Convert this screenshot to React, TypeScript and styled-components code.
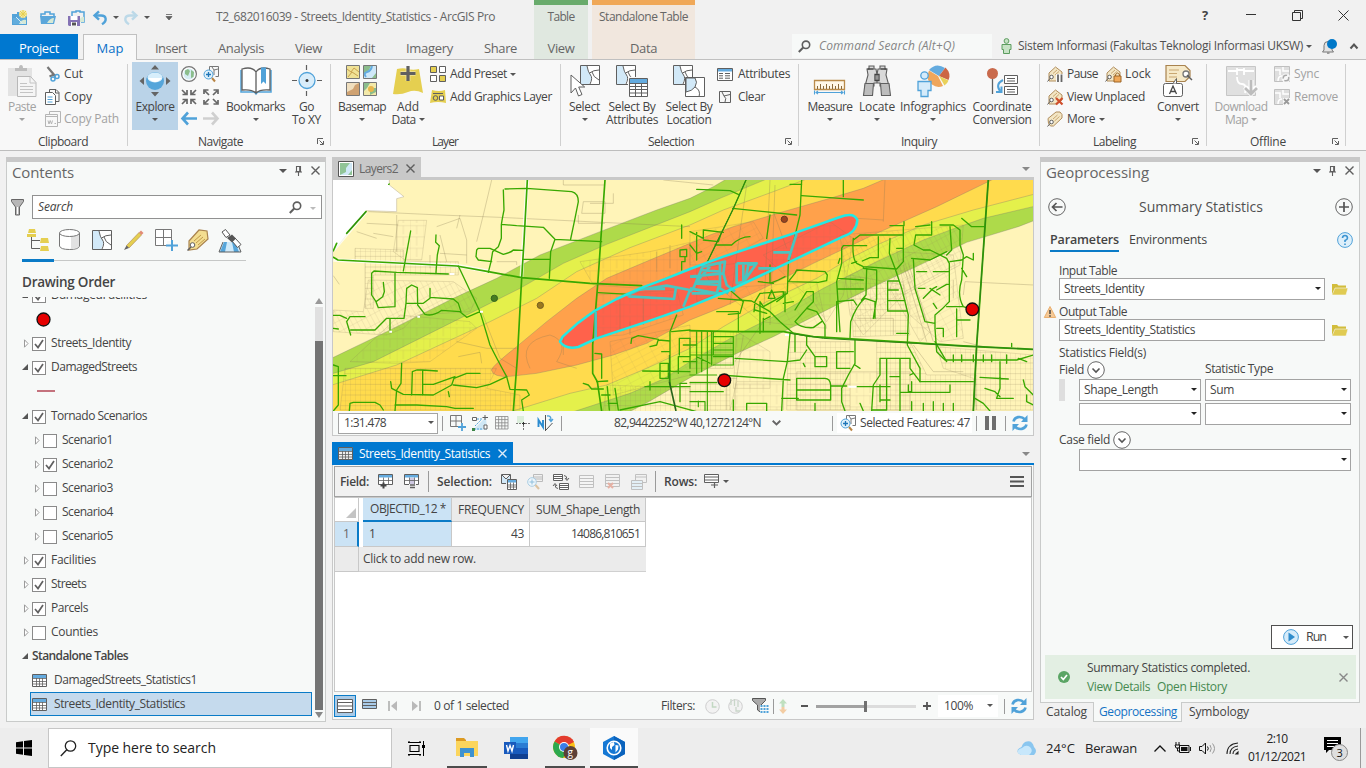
import React, { useLayoutEffect, useRef } from "react";
import styled, { createGlobalStyle, css } from "styled-components";

const Global = createGlobalStyle`
  *, *::before, *::after { box-sizing: border-box; }
  html, body { margin: 0; padding: 0; overflow: hidden; background: #f1f1f1; }
  body { font-family: "Open Sans", "Noto Sans", sans-serif; font-size: 12px; color: #444; line-height: 16px; }
  svg { display: block; flex: none; overflow: visible; }
`;

/* ---------- text that tracks itself to a set measure ---------- */

const TextBox = styled.span<{ $w: number; $ml?: number; $size?: number; $weight?: number; $italic?: boolean; $color?: string; $lh?: number }>`
  display: block;
  flex: none;
  white-space: pre;
  width: ${(p) => p.$w}px;
  margin-left: ${(p) => p.$ml ?? 0}px;
  font-size: ${(p) => p.$size ?? 12}px;
  font-weight: ${(p) => p.$weight ?? 400};
  line-height: ${(p) => p.$lh ?? 16}px;
  ${(p) => p.$italic && css`font-style: italic;`}
  ${(p) => p.$color && css`color: ${p.$color};`}
`;

type TProps = { w: number; ml?: number; size?: number; weight?: number; italic?: boolean; color?: string; lh?: number; children: string };

function T({ w, ml, size, weight, italic, color, lh, children }: TProps) {
  const ref = useRef<HTMLSpanElement>(null);
  useLayoutEffect(() => {
    const el = ref.current;
    if (!el) return;
    el.style.letterSpacing = "0px";
    const natural = el.getBoundingClientRect().width;
    el.style.letterSpacing = `${(w - natural) / children.length}px`;
  }, [w, children]);
  return (
    <TextBox $w={w} $ml={ml} $size={size} $weight={weight} $italic={italic} $color={color} $lh={lh}>
      <span ref={ref}>{children}</span>
    </TextBox>
  );
}

/* ---------- shared pieces ---------- */

const Line = styled.div<{ $ml?: number; $h?: number; $mt?: number }>`
  display: flex;
  flex: none;
  align-items: center;
  height: ${(p) => (p.$h ? `${p.$h}px` : "auto")};
  margin-left: ${(p) => p.$ml ?? 0}px;
  margin-top: ${(p) => p.$mt ?? 0}px;
`;

const IconBox = styled.span<{ $w: number; $ml?: number; $mt?: number }>`
  display: flex;
  flex: none;
  width: ${(p) => p.$w}px;
  margin-left: ${(p) => p.$ml ?? 0}px;
  margin-top: ${(p) => p.$mt ?? 0}px;
`;

function Ico({ w, h = w, ml, mt, children }: { w: number; h?: number; ml?: number; mt?: number; children: React.ReactNode }) {
  return (
    <IconBox $w={w} $ml={ml} $mt={mt}>
      <svg width={w} height={h} viewBox={`0 0 ${w} ${h}`} fill="none">
        {children}
      </svg>
    </IconBox>
  );
}

const CaretShape = styled.i<{ $c?: string; $ml?: number; $s?: number; $mt?: number }>`
  flex: none;
  width: 0;
  height: 0;
  margin-left: ${(p) => p.$ml ?? 0}px;
  margin-top: ${(p) => p.$mt ?? 0}px;
  border: ${(p) => p.$s ?? 3}px solid transparent;
  border-bottom: 0;
  border-top-color: ${(p) => p.$c ?? "#555"};
`;

const Divider = styled.i<{ $h: number; $ml: number }>`
  flex: none;
  width: 1px;
  height: ${(p) => p.$h}px;
  margin-left: ${(p) => p.$ml}px;
  background: #9a9a9a;
`;

const G = "#5f5f5f";
const B = "#50a2d9";
const Y = "#e5cf50";

const CloseX = ({ ml, c = G, s = 9 }: { ml?: number; c?: string; s?: number }) => (
  <Ico w={s} ml={ml}><path d={`M.5 .5 ${s - 0.5} ${s - 0.5}M${s - 0.5} .5 .5 ${s - 0.5}`} stroke={c} strokeWidth="1.4" /></Ico>
);
const Pin = ({ ml }: { ml: number }) => (
  <Ico w={7} h={10} ml={ml} mt={-2}><path d="M1.5 .5h4v5h-4zM4.7 .5v5M0 6h7M3.5 6v4" stroke={G} strokeWidth="1.1" /></Ico>
);
const Magnifier = ({ ml }: { ml: number }) => (
  <Ico w={13} h={13} ml={ml}><circle cx="8" cy="4.8" r="3.7" stroke={G} strokeWidth="1.6" /><path d="M5.2 7.5.8 12" stroke={G} strokeWidth="2" /></Ico>
);
const TableIcon = ({ ml, bg = "#fff" }: { ml?: number; bg?: string }) => (
  <Ico w={15} h={13} ml={ml}>
    <path d="M.5 .5h14v12H.5z" fill={bg} stroke={G} /><path d="M1 1h13v3H1z" fill="#64abdf" />
    <path d="M1 4.5h13M1 7.5h13M1 10h13M4.500 4v8.5M7.5 4v8.5M10.500 4v8.5" stroke={G} strokeWidth=".8" />
  </Ico>
);
const Refresh = ({ ml, mt }: { ml: number; mt?: number }) => (
  <Ico w={16} h={16} ml={ml} mt={mt}>
    <path d="M1.5 6.5C2.5 1.8 9 .2 13 4.5M14.5 9.5C13.5 14.2 7 15.8 3 11.5" stroke={B} strokeWidth="2.6" />
    <path d="M15.5 0v7H9zM.5 16V9H7z" fill={B} />
  </Ico>
);

/* ---------- header ---------- */

const Screen = styled.div`width: 1366px; height: 768px; display: flex; flex-direction: column; background: #f1f1f1; overflow: hidden;`;
const Header = styled.header`display: flex; flex: none; height: 60px; border-bottom: 1px solid #c0c0c0;`;
const HeadLeft = styled.div`width: 534px; display: flex; flex-direction: column; height: 60px;`;
const HeadRight = styled.div`flex: 1; display: flex; flex-direction: column;`;
const TabRow = styled.nav`display: flex; height: 26px; align-items: stretch;`;
const RibbonTab = styled.div<{ $w: number; $ml?: number; $kind?: "project" | "active" }>`
  display: flex;
  flex: none;
  justify-content: center;
  width: ${(p) => p.$w}px;
  height: 25px;
  padding-top: 3px;
  margin-left: ${(p) => p.$ml ?? 0}px;
  color: #666;
  ${(p) => p.$kind === "project" && css`background: #0078d0; color: #fff;`}
  ${(p) => p.$kind === "active" && css`height: 26px; padding-top: 2px; background: #f8f8f8; border: 1px solid #c0c0c0; border-bottom: 0; color: #0a70c8;`}
`;
const Context = styled.div<{ $w: number; $ml?: number; $bg: string; $bar: string }>`
  display: flex;
  flex: none;
  flex-direction: column;
  align-items: center;
  width: ${(p) => p.$w}px;
  height: 59px;
  margin-left: ${(p) => p.$ml ?? 0}px;
  border-top: 5px solid ${(p) => p.$bar};
  background: ${(p) => p.$bg};
  color: #666;
  padding-top: 4px;
  gap: 14px;
`;
const CommandSearch = styled.div`display: flex; align-items: center; flex: none; width: 200px; height: 24px; margin-left: 97px; background: #f7f9f8; padding-left: 6px;`;

function QuickAccess() {
  return (
    <>
      <Ico w={16} h={15} ml={12} mt={1}>
        <path d="M0 4h5V2h5v2h5v11H0z" fill="#54a3d8" /><path d="M1 8h13v6H1z" fill="#62addd" /><path d="M7 14q3-5 7-4v4z" fill="#d7e9d5" /><path d="M4 7l7 7" stroke="#d6ecf8" /><circle cx="11" cy="4" r="4" fill="#f5eaa9" /><path d="M11 0v8M7 4h8M8 1l6 6M14 1 8 7" stroke="#e5cf50" />
      </Ico>
      <Ico w={16} h={13} ml={12} mt={1}>
        <path d="M1 6V3h4V1h5v2h4v3" stroke={B} strokeWidth="1.5" /><path d="M0 5h16l-2 8H1z" fill="#5aa6da" /><path d="M7 12q3-5 7-5l-1 5z" fill="#d7e9d5" />
      </Ico>
      <Ico w={17} h={16} ml={12} mt={2}>
        <path d="M4 6V2h4V1h4v1h4v10h-3" stroke={B} strokeWidth="1.5" /><path d="M11 10q3-4 5-3v5h-4z" fill="#d7e9d5" />
        <path d="M0 6h12v10H1l-1-1z" fill="#8472b4" /><path d="M2.5 6h7v4h-7zM3 12h6v4H3z" fill="#fff" /><path d="M4 12.5h4v3H4z" fill="#555" />
      </Ico>
      <Ico w={14} h={14} ml={8} mt={3}><path d="M2 4.500h6C13.500 4.500 14.500 10 9 13.300" stroke={B} strokeWidth="2.400" /><path d="M6 .3 1.500 4.500 6 8.700" stroke={B} strokeWidth="2.400" /></Ico>
      <CaretShape $ml={6} $s={3} $mt={1} />
      <Ico w={14} h={14} ml={5} mt={3}><path d="M12 4.500H6C.5 4.500-.5 10 5 13.300" stroke="#bcd9e8" strokeWidth="2.400" /><path d="M8 .3 12.500 4.500 8 8.700" stroke="#bcd9e8" strokeWidth="2.400" /></Ico>
      <CaretShape $ml={6} $s={3} $mt={1} />
      <Ico w={6} h={6} ml={16} mt={1}><path d="M0 .5h6M0 2.500h6L3 6z" stroke={G} strokeWidth=".8" fill={G} /></Ico>
    </>
  );
}

function TopBar() {
  const tabs: [string, number, number][] = [["Insert", 32, 18], ["Analysis", 46, 31], ["View", 27, 31], ["Edit", 22, 31], ["Imagery", 47, 31], ["Share", 33, 31]];
  return (
    <Header>
      <HeadLeft>
        <Line $h={33}>
          <QuickAccess />
          <T w={279} ml={44} color="#666">T2_682016039 - Streets_Identity_Statistics - ArcGIS Pro</T>
        </Line>
        <Line $h={1} />
        <TabRow>
          <RibbonTab $w={78} $kind="project"><T w={40} size={13} lh={22}>Project</T></RibbonTab>
          <RibbonTab $w={54} $ml={5} $kind="active"><T w={27} size={13} lh={22}>Map</T></RibbonTab>
          {tabs.map(([n, w, ml]) => <RibbonTab key={n} $w={w} $ml={ml}><T w={w} size={13} lh={22}>{n}</T></RibbonTab>)}
        </TabRow>
      </HeadLeft>
      <Context $w={54} $bg="#e0e8e0" $bar="#68ab6b"><T w={27}>Table</T><T w={27} size={13} lh={18}>View</T></Context>
      <Context $w={103} $ml={4} $bg="#f1e7de" $bar="#f0a858"><T w={89}>Standalone Table</T><T w={27} size={13} lh={18}>Data</T></Context>
      <HeadRight>
        <Line $h={30} $ml={507}>
          <T w={7} size={13} weight={700}>?</T>
          <Ico w={10} h={2} ml={37}><path d="M0 .500h10" stroke="#333" /></Ico>
          <Ico w={11} h={11} ml={36}><path d="M.5 2.500h8v8h-8zM2.500 2.500V.5h8v8h-2" stroke="#333" /></Ico>
          <Ico w={11} h={11} ml={35}><path d="M.5 .5l10 10M10.500 .5l-10 10" stroke="#333" /></Ico>
        </Line>
        <Line $h={24} $mt={4}>
          <CommandSearch>
            <Magnifier ml={0} />
            <T w={136} ml={8} italic color="#858585">Command Search (Alt+Q)</T>
          </CommandSearch>
          <Ico w={11} h={16} ml={9}><circle cx="5.500" cy="3" r="2.400" fill="#c7e2c5" stroke="#5c9d5f" /><path d="M1 6.500h9v5H8.500v4h-6v-4H1z" fill="#c7e2c5" stroke="#5c9d5f" /></Ico>
          <T w={285} ml={6} color="#505050">Sistem Informasi (Fakultas Teknologi Informasi UKSW)</T>
          <CaretShape $ml={3} />
          <Ico w={15} h={15} ml={10}>
            <path d="M2 11V6.500a4 4 0 0 1 8 0V11l1.500 2H.5z" fill="#e3e3e3" stroke="#777" /><path d="M5 13.500h2.500v1.200H5z" fill="#777" /><circle cx="10" cy="5" r="5" fill="#0078c8" />
          </Ico>
          <Ico w={8} h={6} ml={13}><path d="M.5 5.500 4 1.500 7.500 5.500" stroke="#555" strokeWidth="2" /></Ico>
        </Line>
      </HeadRight>
    </Header>
  );
}

/* ---------- ribbon ---------- */

const Ribbon = styled.section`display: flex; flex: none; height: 91px; background: #f8f8f8; border-bottom: 1px solid #bdbdbd;`;
const GroupBox = styled.div<{ $w: number }>`
  display: flex;
  flex: none;
  flex-direction: column;
  width: ${(p) => p.$w}px;
  position: relative;
  &::after { content: ""; width: 1px; position: absolute; right: 0; top: 4px; bottom: 4px; background: #d0d0d0; }
`;
const GroupBody = styled.div`display: flex; height: 74px; padding-top: 2px;`;
const GroupFoot = styled.div<{ $l: number }>`display: flex; align-items: center; height: 16px; padding-left: ${(p) => p.$l}px;`;
const Big = styled.div<{ $w: number; $ml?: number; $on?: boolean; $off?: boolean }>`
  display: flex;
  flex: none;
  flex-direction: column;
  align-items: center;
  width: ${(p) => p.$w}px;
  height: 68px;
  margin-left: ${(p) => p.$ml ?? 0}px;
  padding-top: 3px;
  background: ${(p) => (p.$on ? "#bad3e8" : "transparent")};
  color: ${(p) => (p.$off ? "#a2a2a2" : "#444")};
`;
const BigLabels = styled.div`display: flex; flex-direction: column; align-items: center; margin-top: 3px;`;
const LabelLine = styled.div`display: flex; height: 13px; align-items: center;`;
const Stack = styled.div<{ $ml: number }>`display: flex; flex-direction: column; margin-left: ${(p) => p.$ml}px; padding-top: 1px;`;
const Small = styled.div<{ $off?: boolean }>`display: flex; align-items: center; height: 22.500px; color: ${(p) => (p.$off ? "#a2a2a2" : "#444")};`;
const MiniGrid = styled.div`display: grid; grid-template-columns: 16px 16px; grid-auto-rows: 16px; gap: 6.500px 6px; margin-left: 3px; padding-top: 4px;`;

const Launcher = ({ ml }: { ml: number }) => (
  <Ico w={7} h={7} ml={ml} mt={-1}><path d="M.5 6V.5H6" stroke={G} /><path d="M2.500 2.500 6 6M6.500 3v3.500H3" stroke={G} /></Ico>
);

function Group({ w, label, lw, l, launch, children }: { w: number; label: string; lw: number; l: number; launch?: number; children: React.ReactNode }) {
  return (
    <GroupBox $w={w}>
      <GroupBody>{children}</GroupBody>
      <GroupFoot $l={l}><T w={lw}>{label}</T>{launch !== undefined && <Launcher ml={launch} />}</GroupFoot>
    </GroupBox>
  );
}

type BigProps = { w: number; ml?: number; on?: boolean; off?: boolean; a: string; aw: number; b?: string; bw?: number; caret?: boolean; icon: React.ReactNode };
function BigButton({ w, ml, on, off, a, aw, b, bw, caret, icon }: BigProps) {
  return (
    <Big $w={w} $ml={ml} $on={on} $off={off}>
      <svg width="32" height="32" viewBox="0 0 32 32" fill="none">{icon}</svg>
      <BigLabels>
        <LabelLine><T w={aw} lh={13}>{a}</T></LabelLine>
        <LabelLine>
          {b && <T w={bw ?? 20} lh={13}>{b}</T>}
          {caret && <CaretShape $ml={b ? 3 : 0} $c={off ? "#a2a2a2" : undefined} $mt={b ? 0 : -1} />}
        </LabelLine>
      </BigLabels>
    </Big>
  );
}

const MapPiece = ({ x = 0, y = 0, s = 1 }: { x?: number; y?: number; s?: number }) => (
  <g transform={`translate(${x} ${y}) scale(${s})`}>
    <path d="M.5 .5h19v19H.5z" fill="#fff" /><path d="M1 1h6q1 6 3 8 3 3-1 10H1z" fill="#d2e9f8" />
    <path d="M.5 .5h19v19H.5zM7 1q1 6 3.500 9 2.500 3-.5 9M9.500 8q4-3 9.500-3M12 7q1 5 7 8" stroke={G} strokeWidth="1" fill="none" />
  </g>
);
const Tag = () => (
  <><path d="M2 7 8.500 1 15 6v5l-5 4H2z" fill="#f3e6c4" stroke="#b08d5c" /><path d="M6 7.500l4-3.500M8 9l4-3.500" stroke="#c9a772" /><circle cx="4.500" cy="11" r="1.800" fill="#fff" stroke={G} /><path d="M3.500 12 .5 15.500" stroke={G} /></>
);
const MoreTag = () => (
  <><path d="M1 7.500 9 1h4l2 2.500v3.500l-8.500 8H3.500l-2-2.500z" fill="#f3e6c4" stroke="#b08d5c" /><path d="M6 8l4.500-4M7.500 10l5-4.500" stroke="#c9a772" /><circle cx="4.500" cy="11" r="1.800" fill="#fff" stroke={G} /><path d="M3.500 12 .5 15.500" stroke={G} /></>
);

function RibbonBar() {
  return (
    <Ribbon>
      <Group w={128} label="Clipboard" lw={50} l={38}>
        <BigButton w={44} off a="Paste" aw={28} caret icon={
          <><path d="M2 3h24v28H2z" fill="#e3e3e3" /><path d="M9 6h12V3h-4q0-3-2-3t-2 3H9z" fill="#bcbcbc" /><path d="M11.500 11.500h13l5.500 6v14H11.500z" fill="#f5f5f5" stroke="#b8b8b8" /><path d="M24 12v6h6M14 18.500h7M14 21.500h13M14 24.500h13M14 27.500h13" stroke="#c4c4c4" /></>
        } />
        <Stack $ml={1}>
          <Small>
            <Ico w={16} h={16}><path d="M2.500 1l8 9.500M4.500 10.500 9 8.500" stroke="#777" strokeWidth="2.200" /><circle cx="12" cy="10.500" r="2" stroke={B} strokeWidth="1.500" /><circle cx="8" cy="13" r="2" stroke={B} strokeWidth="1.500" /></Ico>
            <T w={19} ml={3}>Cut</T>
          </Small>
          <Small>
            <Ico w={16} h={16}><path d="M4.500 3V.5h6.500l3 3v9h-3" stroke={G} /><path d="M.5 3.500h7l3 3v9H.5z" fill="#fff" stroke={G} /><path d="M2.500 8h5M2.500 10.500h5M2.500 13h5" stroke={B} /><path d="M10.500 1v3H14" stroke={G} /></Ico>
            <T w={28} ml={3}>Copy</T>
          </Small>
          <Small $off>
            <Ico w={16} h={16}><path d="M4.500 3V.5h11v11H13M.5 3.500h12v12H.5zM.5 5.500h12" stroke="#b5b5b5" /><path d="M3 9.500l1 3.500 1.200-3.500L6.500 13l1-3.500M9.500 12.500h1.500" stroke="#b5b5b5" /></Ico>
            <T w={55} ml={3}>Copy Path</T>
          </Small>
        </Stack>
      </Group>

      <Group w={203} label="Navigate" lw={45} l={70} launch={74}>
        <BigButton w={46} ml={4} on a="Explore" aw={39} caret icon={
          <><path d="M12 4.500l4-4.500 4 4.500zM12 27l4 4.500 4-4.500zM5 12 .5 16l4.500 4zM27 12l4.500 4-4.500 4z" fill="#646464" /><circle cx="16" cy="16" r="9" fill="#55a5da" /><ellipse cx="16" cy="12.500" rx="7.500" ry="5" fill="#d7eefb" /><path d="M9 13q7 8 14 0" fill="#fff" /></>
        } />
        <MiniGrid>
          <svg width="16" height="16" viewBox="0 0 16 16" fill="none"><circle cx="8" cy="8" r="7.400" fill="#fff" stroke="#777" strokeWidth="1.200" /><circle cx="8" cy="8" r="5.600" fill="#d5ecf3" /><path d="M4 4.500 7 3l2 2-2 5-3-2zM10 4l3 2-.5 5-2.500 1z" fill="#8bbd8c" /></svg>
          <svg width="16" height="16" viewBox="0 0 16 16" fill="none"><path d="M6.500 4V.5h9v10h-3M9 1l2 3 4-1M11 4v5" stroke="#777" /><circle cx="5.500" cy="8.500" r="4.500" fill="#def0fa" stroke={B} /><path d="M3 8.500h5M5.500 6v5" stroke="#1d75b8" strokeWidth="1.300" /><path d="M9 12l3 3.500" stroke="#b98443" strokeWidth="2" /></svg>
          {["M1 1 5 5M15 1 11 5M1 15l4-4M15 15l-4-4M1.500 5.500H6V1M14.500 5.500H10V1M1.500 10.500H6V15M14.500 10.500H10V15", "M2 2 6 6M14 2 10 6M2 14l4-4M14 14l-4-4M1 5V1h4.500M10.500 1H15v4M1 11v4h4.500M10.500 15H15v-4"].map((d) => (
            <svg key={d} width="16" height="16" viewBox="0 0 16 16" fill="none"><path d={d} stroke="#666" strokeWidth="1.700" /></svg>
          ))}
          <svg width="16" height="16" viewBox="0 0 16 16" fill="none"><path d="M1 7.500h15M7 1.500 1.500 7.500 7 13.500" stroke={B} strokeWidth="2.600" /></svg>
          <svg width="16" height="16" viewBox="0 0 16 16" fill="none"><path d="M0 7.500h15M9 1.500l5.500 6-5.500 6" stroke="#cfcfcf" strokeWidth="2.600" /></svg>
        </MiniGrid>
        <BigButton w={63} ml={5} a="Bookmarks" aw={59} caret icon={
          <><path d="M1 5v22h13.500l1.500 2 1.500-2H31V5" fill="#fff" stroke="#50a2d9" strokeWidth="1.500" /><path d="M16 28V7Q12 1 2 4v21q10-1 14 3 4-4 14-3V4Q20 1 16 7" fill="#fff" stroke={G} strokeWidth="1.300" /><path d="M21 2.500h5V19l-2.500-2.500L21 19z" fill={B} /></>
        } />
        <BigButton w={35} ml={2} a="Go" aw={15} b="To XY" bw={29} icon={
          <><circle cx="16" cy="15.500" r="8" fill="#d9edfa" stroke={B} strokeWidth="1.300" /><path d="M1 15.500h5M26 15.500h5M15.500 0v5M15.500 26v5" stroke={G} strokeWidth="1.200" /><circle cx="16" cy="15.500" r="1.500" fill="#333" /></>
        } />
      </Group>

      <Group w={230} label="Layer" lw={26} l={101}>
        <BigButton w={52} ml={5} a="Basemap" aw={48} caret icon={
          <>
            <path d="M.5 .5h13v13H.5z" fill="#f0e296" stroke="#777" /><path d="M1 4l4 3 3-4 5 4M2 12l4-5 6 4" stroke="#c8a14e" />
            <path d="M17.500 .5h13v13h-13z" fill="#cfe8f8" stroke="#777" /><path d="M18 1h7l-2 4-5 4zM30 8l-4 5h4z" fill="#8bbd8c" /><path d="M26 1q-1 5-5 6t-1 5" stroke="#64abdf" strokeWidth="2" />
            <path d="M.5 17.500h13v13H.5z" fill="#f0dfbf" stroke="#777" /><path d="M1 30V27L7 24l2-4 4-2v12z" fill="#cfa272" />
            <path d="M17.500 17.500h13v13h-13z" fill="#f3e9a9" stroke="#777" /><path d="M18 18h6l-3 5-3 3zM24 23h6v4l-6 3z" fill="#8bbd8c" /><circle cx="25" cy="24" r="3" fill="#e8b64c" />
          </>
        } />
        <BigButton w={34} ml={3} a="Add" aw={22} b="Data" bw={24} caret icon={
          <><path d="M5 4q6-1.500 11 0t11 0l4 24q-8-4-15-1T1 29z" fill={Y} /><path d="M16 1v15M8.500 8.500h15" stroke="#fff" strokeWidth="5" opacity=".35" /><path d="M16 1v15M8.500 8.500h15" stroke="#606060" strokeWidth="3.200" /></>
        } />
        <Stack $ml={5}>
          <Small>
            <Ico w={16} h={16}><path d="M.5 .5h6v6h-6z" fill={Y} stroke={G} /><path d="M9.500 .5h6v6h-6zM.5 9.500h6v6h-6z" fill="#fff" stroke={G} /><path d="M9.500 9.500h6v6h-6z" fill={Y} stroke={G} /></Ico>
            <T w={57} ml={4}>Add Preset</T><CaretShape $ml={3} />
          </Small>
          <Small>
            <Ico w={16} h={15}><path d="M2 1q7 2 13 0l1 13q-8-2-16 0z" fill={Y} /><path d="M3 4.500h10" stroke={G} /><circle cx="5.500" cy="9" r="2.300" stroke={G} /><path d="M9.500 7h4v4h-4z" stroke={G} fill="#fff" /></Ico>
            <T w={102} ml={4}>Add Graphics Layer</T>
          </Small>
        </Stack>
      </Group>

      <Group w={238} label="Selection" lw={46} l={87} launch={91}>
        <BigButton w={37} ml={5} a="Select" aw={31} caret icon={
          <><MapPiece x={11} y={0} /><path d="M2 10v18l4.500-5 3 8 3.500-1.500-3.300-7.500h6z" fill="#fff" stroke={G} strokeWidth="1" /></>
        } />
        <BigButton w={56} ml={1} a="Select By" aw={47} b="Attributes" bw={52} icon={
          <><MapPiece x={0} y={0} /><path d="M12 12h20v20H12z" fill="#f8f8f8" /><path d="M13.500 13.500h18v18h-18z" fill="#fff" stroke={G} /><path d="M14 14h17v4H14z" fill="#64abdf" /><path d="M13 18.500h18M13 21.500h18M13 24.500h18M13 28h18M19.500 18v13M25.500 18v13" stroke={G} /></>
        } />
        <BigButton w={50} ml={4} a="Select By" aw={47} b="Location" bw={45} icon={
          <><MapPiece x={0} y={0} /><path d="M12.500 12.500h19v19h-19z" fill="#fff" stroke={G} /><path d="M13 13h9q3 4 0 9-3 4-9 5z" fill="#d2e9f8" stroke={G} /><path d="M22 22q6 3 4 10" stroke={G} /></>
        } />
        <Stack $ml={3}>
          <Small>
            <Ico w={16} h={13}><path d="M.5 .5h15v12H.5z" fill="#fff" stroke={G} /><path d="M1 1h14v2.500H1z" fill="#64abdf" /><path d="M2 5.500h4M8 5.500h5M2 7.800h4M8 7.800h5M2 10.200h4M8 10.200h5" stroke={G} /></Ico>
            <T w={52} ml={5}>Attributes</T>
          </Small>
          <Small>
            <Ico w={12} h={12} ml={2}><path d="M.5 .5h11v11H.5zM3 1l2 4 6-1.500M5 5q3 2 1 6" stroke={G} /></Ico>
            <T w={27} ml={7}>Clear</T>
          </Small>
        </Stack>
      </Group>

      <Group w={241} label="Inquiry" lw={36} l={102}>
        <BigButton w={50} ml={6} a="Measure" aw={45} caret icon={
          <><path d="M.5 15.500h30v9H.5z" fill="#fff7e8" stroke="#b98a4a" strokeWidth="1.300" /><path d="M3.500 24v-3M6.500 24v-5M9.500 24v-3M12.500 24v-5M15.500 24v-3M18.500 24v-5M21.500 24v-3M24.500 24v-5M27.500 24v-3" stroke="#8a6a3c" /><path d="M2 27.500h27M.5 25.500v4M30.500 25.500v4M4 26l-2 1.500L4 29M27 26l2 1.500-2 1.500" stroke={B} strokeWidth="1.100" /></>
        } />
        <BigButton w={40} ml={2} a="Locate" aw={36} caret icon={
          <><path d="M8 1h5v3h2l1 6v8h-3v3H4l3-11-1-6h2zM19 1h5v3h2l-1 6 3 11h-9v-3h-3v-8l1-6h2z" fill="#d9d9d9" stroke={G} strokeWidth="1.100" /><path d="M4 18.500h8.500l-1 12H2.500zM19.500 18.500H28l1.500 12h-9z" fill="#bdbdbd" stroke={G} strokeWidth="1.100" /><path d="M14 9.500h4v6h-4zM6.500 4h6M19.500 4h6" stroke="#444" strokeWidth="1.300" /></>
        } />
        <BigButton w={70} ml={1} a="Infographics" aw={66} caret icon={
          <><path d="M22 11 12 5Q19-3 28 3z" fill="#64abdf" /><path d="M22 11 28.500 2.500q6 6 3 12.500z" fill="#cc6544" /><path d="M22 11l9.500 4.500q-1 3-4 5z" fill="#e9d15a" /><path d="M21 11 12 5.500q-4 9 3 14 5 4 11 1.500z" fill="#efa65c" /><circle cx="7.500" cy="10.500" r="3.700" fill="#d5ebfa" stroke={B} strokeWidth="1.300" /><path d="M1 16.500h13v9h-3v6H4v-6H1z" fill="#d5ebfa" stroke={B} strokeWidth="1.300" /></>
        } />
        <BigButton w={64} ml={2} a="Coordinate" aw={59} b="Conversion" bw={59} icon={
          <><path d="M6.500 8v21" stroke={G} strokeWidth="1.300" /><circle cx="6.500" cy="8.500" r="5.500" fill="#c96a4c" /><path d="M18.500 10.500h13v8h-13zM18.500 21.500h13v8h-13z" fill="#fff" stroke={G} /><path d="M21 13.500h8M21 16h8M21 24.500h8M21 27h8" stroke={G} /><path d="M17 15q-8 4-3 11M15.500 21.500v5.500H10" stroke={B} strokeWidth="2" /></>
        } />
      </Group>

      <Group w={167} label="Labeling" lw={43} l={53} launch={56}>
        <Stack $ml={7}>
          <Small>
            <Ico w={16} h={16}><Tag /><path d="M9 8h7v8H9z" fill="#f8f8f8" /><path d="M11 8.500V16M14.500 8.500V16" stroke="#666" strokeWidth="1.800" /></Ico><T w={31} ml={4}>Pause</T>
            <Ico w={16} h={16} ml={7}><Tag /><path d="M9 10h7v6H9z" fill="#f0a858" stroke="#9c6526" /><path d="M10.500 10V8.500q2-3 4 0V10" stroke="#9c6526" /></Ico><T w={26} ml={4}>Lock</T>
          </Small>
          <Small><Ico w={16} h={16}><Tag /><path d="M9 9l6.500 6.500M15.500 9 9 15.500" stroke="#cf4f2c" strokeWidth="2.200" /></Ico><T w={78} ml={4}>View Unplaced</T></Small>
          <Small><Ico w={16} h={16}><MoreTag /></Ico><T w={28} ml={4}>More</T><CaretShape $ml={4} /></Small>
        </Stack>
        <BigButton w={46} ml={4} a="Convert" aw={42} caret icon={
          <><path d="M4 .5h19l5 5v6l-5 5H4z" fill="#f6e9c8" stroke="#a9834f" strokeWidth="1.200" /><path d="M7 5h10M7 8.500h8M7 12h8" stroke="#c9a772" /><circle cx="24" cy="9" r="3" fill="#fff" stroke="#777" strokeWidth="1.300" /><path d="M25 10l5 5" stroke={G} strokeWidth="1.500" /><rect x="1.500" y="18.500" width="19" height="13" rx="2" fill="#fff" stroke={G} /><path d="M11 18.500l3.500-5v5" fill="#fff" stroke={G} /><path d="M7.500 29l3.500-8 3.500 8M8.500 26.500h5" stroke="#444" strokeWidth="1.300" /></>
        } />
      </Group>

      <Group w={139} label="Offline" lw={36} l={43} launch={46}>
        <BigButton w={56} ml={6} off a="Download" aw={53} b="Map" bw={23} caret icon={
          <><path d="M1.500 1.500h29v29h-29z" fill="#e0e0e0" stroke="#c6c6c6" /><path d="M3 6h9M12 3v7M12 5h7M19 3v7M19 6h10M12 12q0 7 5 7t3 9" stroke="#fff" strokeWidth="1.800" /><path d="M26 15v13M20 22l6 6.500 6-6.500" stroke="#fff" strokeWidth="5" /><path d="M26 15v14M20 23l6 6 6-6" stroke="#bdbdbd" strokeWidth="2.800" /></>
        } />
        <Stack $ml={5}>
          <Small $off><Ico w={16} h={16}><path d="M.5 .5h15v15H.5z" fill="#dedede" stroke="#c0c0c0" /><path d="M1 4h5v5M9 1v4h6M4 15q0-5 4-5" stroke="#fff" strokeWidth="1.500" /><circle cx="12" cy="12" r="4.500" fill="#f8f8f8" /><circle cx="12" cy="12" r="2.800" stroke="#aaa" strokeWidth="1.500" strokeDasharray="6 2" /></Ico><T w={25} ml={4}>Sync</T></Small>
          <Small $off><Ico w={16} h={16}><path d="M.5 .5h15v15H.5z" fill="#dedede" stroke="#c0c0c0" /><path d="M1 4h5v5M9 1v4h6M4 15q0-5 4-5" stroke="#fff" strokeWidth="1.500" /><path d="M9 9h7v7H9z" fill="#f8f8f8" /><path d="M10 10l5 5M15 10l-5 5" stroke="#999" strokeWidth="1.800" /></Ico><T w={44} ml={4}>Remove</T></Small>
        </Stack>
      </Group>
    </Ribbon>
  );
}

/* ---------- contents pane ---------- */

const Workspace = styled.main`display: flex; flex: none; height: 577px; padding: 6px 6px 0 6px;`;
const Pane = styled.section<{ $w: number; $h: number; $pl?: number }>`
  display: flex;
  flex-direction: column;
  flex: none;
  width: ${(p) => p.$w}px;
  height: ${(p) => p.$h}px;
  padding-left: ${(p) => p.$pl ?? 0}px;
  background: #f7f9f8;
  border: 1px solid #c9cbca;
  border-top: 5px solid #c8c8c8;
`;
const FindBox = styled.div`display: flex; align-items: center; width: 290px; height: 24px; margin-left: 8px; border: 1px solid #919191; background: #fff;`;
const ToolTabs = styled.div`display: flex; align-items: flex-start; height: 32px; width: 224px; margin: 10px 0 0 14px; border-bottom: 1px solid #c6c8c7;`;
const ActiveBar = styled.i`display: block; width: 32px; height: 3px; margin: -2px 0 0 14px; background: #0a7bc7; position: relative;`;
const TreeWrap = styled.div`display: flex; height: 422px; margin-top: 5px; overflow: hidden;`;
const Tree = styled.div`width: 304px; margin-top: -14px;`;
const TreeRow = styled.div<{ $pad: number; $h?: number }>`display: flex; align-items: center; height: ${(p) => p.$h ?? 24}px; padding-left: ${(p) => p.$pad}px;`;
const SelectedRow = styled.div`display: flex; align-items: center; width: 282px; height: 24px; margin-left: 22px; padding-left: 1px; border: 1px solid #0a7bc7; background: #c5daed;`;
const Check = styled.span`display: flex; flex: none; width: 14px; height: 14px; margin-top: 2px; border: 1px solid #8a8a8a; background: #fff;`;
const ScrollBar = styled.div`display: flex; flex-direction: column; align-items: center; width: 8px; margin-left: 3px; padding-top: 1px;`;
const ScrollTrack = styled.i`display: block; width: 8px; height: 34px; margin-top: 3px; background: #e0e0e0;`;
const ScrollThumb = styled.i`display: block; width: 8px; height: 369px; background: #747474;`;

const Toggle = ({ open }: { open?: boolean }) =>
  open ? <Ico w={10} h={6}><path d="M6 0v6H0z" fill="#555" /></Ico> : <Ico w={10} h={9}><path d="M2.500 .8v7.400L6 4.500z" fill="#fff" stroke="#9a9a9a" /></Ico>;

function TreeItem({ name, w, pad = 14, open, on, h }: { name: string; w: number; pad?: number; open?: boolean; on?: boolean; h?: number }) {
  return (
    <TreeRow $pad={pad} $h={h}>
      <Toggle open={open} />
      <Check>{on && <svg width="12" height="12" viewBox="0 0 12 12" fill="none"><path d="M2 6l3 3.500L10 2" stroke="#606060" strokeWidth="1.700" /></svg>}</Check>
      <T w={w} ml={5}>{name}</T>
    </TreeRow>
  );
}

const PaneTools = () => (<><Pin ml={8} /><Line $mt={-3}><CloseX ml={9} /></Line></>);

function Contents() {
  return (
    <Pane $w={320} $h={565} $pl={1}>
      <Line $h={21} $ml={4} $mt={-1}><T w={62} size={15} lh={20} color="#666">Contents</T><CaretShape $ml={205} $s={4} $mt={-1} /><PaneTools /></Line>
      <Line $ml={3} $mt={13}>
        <Ico w={13} h={17}><path d="M.5 .5h12v2L8.500 8v8h-4V8L.5 2.500z" fill="#b7b7b7" stroke="#666" /><path d="M6.500 8v7" stroke="#fff" /></Ico>
        <FindBox><T w={35} ml={5} italic>Search</T><Magnifier ml={216} /><CaretShape $ml={8} $c="#bbb" $mt={3} /></FindBox>
      </Line>
      <ToolTabs>
        <Ico w={22} h={22} ml={5}><path d="M2 0h6l1 4H1zM0 5h9v3H0zM14 9h7l1 5h-9zM14 17h7l1 5h-9z" fill={Y} /><path d="M4.500 8v11.500H13M4.500 11.500H13" stroke={G} /></Ico>
        <Ico w={21} h={21} ml={10}><path d="M.5 4v13q1 3.500 10 3.500t10-3.500V4" fill="#fff" stroke="#777" /><path d="M12 5h8v12q-2 3-8 3z" fill="#e2e2e2" /><ellipse cx="10.500" cy="4" rx="10" ry="3.500" fill="#fff" stroke="#777" /></Ico>
        <Ico w={20} h={20} ml={12} mt={1}><MapPiece /></Ico>
        <Ico w={20} h={20} ml={12} mt={1}><path d="M2.500 15.500 15 2.500l2.500 2.500L5 18z" fill={Y} stroke="#a9834f" strokeWidth=".6" /><path d="M15 2.500 17 .5l2.500 2.500-2 2z" fill="#e28b75" /><path d="M2.500 15.500 0 20l5-2z" fill="#666" /></Ico>
        <Ico w={23} h={22} ml={11}><path d="M.5 .5h16v16H.5zM8.500 .5v16M.5 8.500h16" stroke="#777" fill="#fff" /><path d="M12 12h12v11H12z" fill="#f7f9f8" opacity=".8" /><path d="M17 11v11M11 16.500h12" stroke="#50a2d9" strokeWidth="2" /></Ico>
        <Ico w={22} h={22} ml={9}><path d="M2 12 12 1l8 1 1 8-11 10-8 1z" fill="#f3dd90" stroke="#a9834f" strokeWidth="1.200" /><path d="M7 12l7-6M9 14l7-6M11 16l7-6" stroke="#c09a4c" /><circle cx="5.500" cy="16" r="2.300" fill="#fff" stroke={G} /><path d="M4 18 .5 21.500" stroke={G} strokeWidth="1.500" /></Ico>
        <Ico w={24} h={24} ml={9}><path d="M5 13 1 23h22l-4-10z" fill="#cfeafa" /><path d="M6 13h3l-2 10H2zM14 13l2 10h5l-4-10z" fill="#55a5da" /><path d="M1 23h22L19 13M5 13 1 23" stroke={G} /><path d="M4 3 7.500 .5 12 6 8 8.500zM14 12l3-3 6 6.500-3.500 3z" fill="#fff" stroke="#555" strokeWidth="1" /><path d="M9 9l5-3.500 4 4-4 4z" fill="#555" /></Ico>
      </ToolTabs>
      <ActiveBar />
      <Line $h={20} $ml={14} $mt={10}><T w={93} size={13.5} weight={600} lh={20}>Drawing Order</T></Line>
      <TreeWrap>
        <Tree>
          <TreeItem name="DamagedFacilities" w={96} open on />
          <TreeRow $pad={28}><Ico w={15} h={15}><circle cx="7.500" cy="7.500" r="6.500" fill="#e60000" stroke="#111" strokeWidth="1.300" /></Ico></TreeRow>
          <TreeItem name="Streets_Identity" w={80} on />
          <TreeItem name="DamagedStreets" w={86} open on />
          <TreeRow $pad={29}><Ico w={18} h={2}><path d="M0 1h18" stroke="#c4727d" strokeWidth="2" /></Ico></TreeRow>
          <TreeItem name="Tornado Scenarios" w={96} open on h={25} />
          {[1, 2, 3, 4, 5].map((n) => <TreeItem key={n} name={`Scenario${n}`} w={51} pad={25} on={n === 2} />)}
          <TreeItem name="Facilities" w={45} on />
          <TreeItem name="Streets" w={35} on />
          <TreeItem name="Parcels" w={37} on />
          <TreeItem name="Counties" w={47} />
          <TreeRow $pad={14}><Toggle open /><T w={96} weight={600}>Standalone Tables</T></TreeRow>
          <TreeRow $pad={24}><TableIcon /><T w={143} ml={7}>DamagedStreets_Statistics1</T></TreeRow>
          <SelectedRow><TableIcon /><T w={131} ml={7}>Streets_Identity_Statistics</T></SelectedRow>
        </Tree>
        <ScrollBar>
          <Ico w={8} h={6}><path d="M4 0l4 6H0z" fill="#999" /></Ico>
          <ScrollTrack /><ScrollThumb />
          <Ico w={8} h={7} mt={2}><path d="M0 0h8L4 6z" fill="#888" /></Ico>
        </ScrollBar>
      </TreeWrap>
    </Pane>
  );
}

/* ---------- map ---------- */

const red = "M690 560L698 545L745 503L790 470L860 432L930 400L1010 370L1080 342L1180 305L1400 232L1530 186Q1572 170 1582 195Q1580 232 1540 244L1370 325L1200 405L1080 455L960 497L800 550L745 576Q705 584 690 560Z";

function Hatch({ d, r = 0, kind = "p1" }: { d: string; r?: number; kind?: string }) {
  return <path d={d} fill={`url(#${kind}${r ? "r" : ""})`} stroke="rgba(135,120,85,.3)" strokeWidth="2" />;
}

const MapSvg = styled.svg`&& { overflow: hidden; }`;

function MapDrawing() {
  return (
    <MapSvg width="700" height="231" viewBox="333 180 700 231" fill="none">
      <defs>
        <pattern id="p1" width="15" height="32" patternUnits="userSpaceOnUse"><path d="M0 0V32M0 0H15M0 16H15" stroke="rgba(135,120,85,.3)" strokeWidth="2" /></pattern>
        <pattern id="p1r" width="15" height="30" patternUnits="userSpaceOnUse" patternTransform="rotate(-28)"><path d="M0 0V30M0 0H15" stroke="rgba(135,120,85,.3)" strokeWidth="2" /></pattern>
        <pattern id="p2" width="40" height="34" patternUnits="userSpaceOnUse"><path d="M0 0V34M0 8H40M20 8V34" stroke="rgba(135,120,85,.2)" strokeWidth="2" /></pattern>
        <pattern id="p2r" width="18" height="34" patternUnits="userSpaceOnUse" patternTransform="rotate(62)"><path d="M0 0V34M0 0H18" stroke="rgba(135,120,85,.24)" strokeWidth="2" /></pattern>
      </defs>
      <path d="M333 180h700v231H333z" fill="#fff4b8" />
      <g transform="translate(330 155) scale(.33333)" strokeLinejoin="round">
        <path d="M0 60H178V90L222 125L200 131V170L108 167L8 292Z" fill="#fff" stroke="#c9c0a4" strokeWidth="2" />
        {/* wind bands, outermost first */}
        <g stroke="rgba(120,120,110,.5)" strokeWidth="2">
          <path d="M0 612L170 530L370 430L500 370L630 300L810 230L980 165L1080 130L1150 95L1210 60H2130V190L2065 215L1910 262L1780 325L1620 400L1480 470L1330 545L1210 600L1080 668L960 738L880 780H0Z" fill="#aeda4a" />
          <path d="M0 658L130 620L430 470L570 400L700 325L830 268L1080 170L1170 130L1310 72H2130V150L1960 190L1880 218L1780 255L1640 320L1480 400L1340 480L1210 545L1080 620L1000 672L900 715L700 780H0Z" fill="#e4f04b" />
          <path d="M0 692L200 630L480 500L620 430L740 350L900 278L1080 210L1180 165L1330 110L1430 72H2130V113L1930 165L1780 210L1640 270L1560 310L1460 370L1310 440L1180 515L1080 580L950 640L830 690L720 715L510 780H0Z" fill="#ffdb4d" />
          <path d="M484 645Q490 630 560 575L650 500L740 430L830 370L960 315L1080 265L1140 240L1210 215L1360 170L1500 130L1600 100L1670 70H1995L1820 155L1640 235L1450 325L1280 410L1180 455L1080 495L950 565L850 600L740 630L620 655L540 664Q490 668 484 645Z" fill="#ffa14b" />
        </g>
        <path d={red} fill="#ff624b" />

        {/* parcels */}
        <Hatch d="M105 320H385V360H130V460H105Z" /><Hatch d="M75 280L220 285V320H75Z" /><Hatch d="M205 196H290L275 315H225L190 290Z" kind="p2" />
        <Hatch d="M115 375L370 380L440 430L420 470L260 480L220 520L170 540L10 530V465L100 470Z" r={1} />
        <Hatch d="M210 480L420 500L440 520L300 620L200 625L60 620Z" kind="p2" />
        <Hatch d="M45 640H500L470 700L570 720V765H30Z" /><Hatch d="M750 320L960 290L1080 262V340L930 400L790 390Z" kind="p2" />
        <Hatch d="M800 420L1040 405L1060 480L880 540L800 545Z" kind="p2" /><Hatch d="M840 560L1080 510V660L850 720Z" r={1} kind="p2" />
        <Hatch d="M830 690L1080 700V770H820Z" /><Hatch d="M1080 230L1270 200L1300 250L1160 330L1080 330Z" r={1} kind="p2" />
        <Hatch d="M1100 340L1260 320L1330 350L1100 440Z" r={1} kind="p2" /><Hatch d="M1170 400L1460 380L1490 520L1290 500Z" r={1} kind="p2" />
        <Hatch d="M1300 300L1500 200L1570 250L1540 420L1490 500L1450 440Z" kind="p2" />
        <Hatch d="M1530 240L1900 210L1890 330L1720 420L1600 540L1560 480Z" r={1} /><Hatch d="M1560 360L1720 390L1740 540L1570 545Z" />
        <Hatch d="M1700 290L1870 300L1900 550L1830 560L1740 480Z" r={1} kind="p2" /><Hatch d="M1720 310L1800 530L1770 560L1680 400Z" kind="p2" />
        <Hatch d="M1220 530L1320 590V700H1210Z" kind="p2" /><Hatch d="M1375 560H1560V765H1370Z" /><Hatch d="M1400 650H1740V765H1400Z" kind="p2" />
        <Hatch d="M1640 560H1740L1790 660H1940V765H1640Z" /><Hatch d="M1820 575L2110 600V765H1940L1930 670L1840 640Z" />
        <Hatch d="M1220 680H1360V765H1200Z" kind="p2" /><Hatch d="M1080 530H1210V640H1080Z" kind="p1" /><Hatch d="M1080 680H1200V765H1080Z" />
        <g stroke="rgba(135,120,85,.36)" strokeWidth="2.500">
          <path d="M485 75L460 180L440 260M115 170L330 180L510 187L1080 215M110 205L205 210M80 230L140 250M130 235L190 245M320 215L390 190L410 255V325M330 295L410 300M330 240L350 320M500 320H560V330M700 75V90H825M760 140H825V175H755ZM850 115V145H780M745 180V205H825M380 560L470 580H560M385 605L450 592L455 625M10 362L28 388M600 640Q560 560 660 540Q720 560 680 620L740 640M1000 75L1150 90M1330 170L1370 280M1580 190L1660 195M1665 75L1660 200M1900 420L1905 380L2110 390M1870 375V430M1580 490H1690V540M1900 560L1960 575M1320 75L1300 500L1215 620M1335 90L1320 510M1250 90L1230 230L1200 450M455 470L510 610L560 640M1220 670H1190V765M1240 540L1215 700V765M1720 330L1790 560M1735 325L1810 560M1750 570L1810 650H1900" />
          <path d="M390 180L380 220M200 180V290M300 340V300M980 290V350M1020 270V340M900 500V540M700 600V540M940 430V510M870 430V530M1110 330L1140 380" />
        </g>
        <path d="M592 75L574 370M10 315L380 332L480 350M108 170L10 285" stroke="#fff" strokeWidth="11" opacity=".75" />

        {/* road centre lines */}
        <g stroke="#38a800" strokeWidth="4" strokeLinecap="round">
          <path d="M592 75L582 260L575 370L562 610L550 768M825 75L812 260L803 390L788 570V655L802 680L815 768M10 307L24 315L380 333L475 350L575 368L780 385L935 392M108 170L50 235M20 265L10 287" strokeWidth="5" />
          <path d="M525 102L590 100L725 110Q745 115 745 140L735 190L722 252M520 105L522 165Q515 200 514 210V250L505 275L488 290L483 320L475 352M514 208L560 212L640 217L675 253L815 260M675 253L662 290L658 370M580 313H658M440 285L445 280H480L520 298Q545 292 550 285L578 286M440 285L438 305L445 315L485 320M176 88L178 87" />
          <path d="M242 228L220 348M318 240L317 262L328 272L322 300L318 352M385 333L450 470L480 570Q500 610 530 665L540 703L590 705L598 720L575 735L580 768M160 382L163 410L158 425L138 440L125 420V355L132 348L200 352L355 357M195 355V455L145 458L138 440M228 445L230 400L245 390L262 398L263 450L285 478Q310 485 335 466L390 470L410 487L450 470M300 400V430L280 445H228L222 490H170L135 525H62M300 427L370 432L385 445L393 470M180 490V525M62 540L50 500L60 485H105M50 490L30 481H10M10 520L25 522" />
          <path d="M215 625L213 685L200 705L195 768M182 680L185 700L220 718L310 720L365 690L372 670L410 655H450M245 720L247 650L260 645H278V720M278 645L322 648M278 688H310L375 665M370 690L440 698L480 688L530 665M355 710L358 725M58 768L60 745L70 742H135L150 750L160 765M195 750H260L350 755L375 760H430M10 630L25 635V750L10 768M10 662H48" />
          <path d="M803 413L900 418M795 595L815 597V670M760 685L775 690L785 702H820M800 680L833 678M832 695L838 765M855 700L865 765M815 720H840M835 745H860M903 565L905 550L925 542L985 553L980 570L960 575M985 555L1020 558M1040 480L1020 530V690M1025 530L1080 525M938 648L1080 650M990 645V670H1015V625H990ZM995 590H1020M1048 600V550H1080M1045 655V605H1080M1050 740V685H1070M945 695H1080M960 680V705M1100 770L990 740L870 765M1060 570H1100M1060 620H1100M1055 210V250M1050 285L1070 283V305H1050ZM1065 305V320H1055V345" />
          <path d="M1248 75L1208 165L1130 325M1208 160L1400 180M1100 103L1200 107L1225 118M1415 75L1410 180L1375 325L1372 415L1300 455L1290 440V535M1415 122L1530 130L1600 135M1540 75V125M1380 88H1415M1320 180L1310 250M1080 230L1120 250V225L1180 232M1100 232V315M1155 270H1205Q1230 245 1260 245M1080 270L1100 295L1115 290M1120 255L1165 260L1175 230" />
          <path d="M1395 355L1400 345L1485 350L1492 360L1490 377L1465 382L1375 380ZM1320 330V385L1345 375L1365 365M1285 380L1330 385" />
          <path d="M1080 527L1210 530H1360L1450 545L1700 560L1900 573L2110 583M1975 75L1965 215L1940 570L1930 768" strokeWidth="5.500" />
          <path d="M1165 430L1265 438L1320 470L1350 500L1390 535L1440 545M1272 470L1275 440L1290 415L1360 410V425L1340 440M1275 465L1310 475M1300 490V530M1300 495L1320 485M1395 465L1430 410H1450V440L1430 460L1395 500Q1410 520 1450 518L1475 500M1430 460L1460 470L1485 510V545M1365 470V410M1390 440L1360 445M1200 405L1240 440L1230 475L1195 478M1325 405L1315 430H1335Z" />
          <path d="M1530 530L1520 380L1535 325V280L1540 272H1610M1525 370L1600 375M1525 402H1600M1525 325L1530 310M1610 340L1608 420L1595 435V440M1570 250Q1565 310 1580 325L1600 335L1700 342L1720 320V215M1570 255L1590 240H1720M1600 335V340L1640 345V430M1597 318L1620 308H1645V245M1520 500V440L1570 435L1580 450M1520 500V530M1560 550L1562 500Q1580 450 1605 430L1635 440V490M1680 250L1678 295L1695 340L1715 400L1735 480L1732 570L1770 640V680M1673 378V468H1730M1673 378H1705M1673 405H1705M1673 437H1725M1565 325L1580 320M1640 430L1630 490M1700 280H1720" />
          <path d="M1680 212H1722V200M1805 200V240H1757L1752 270L1780 285H1800L1850 310L1858 325V440Q1840 460 1815 480V520L1820 590L1845 615H2060L2110 600M1757 215L1800 210M1860 215L1865 285L1850 300M1830 210H1870L1890 225V270L1900 300L1895 375Q1880 420 1900 455L1850 455M1895 190L1925 215H1965M1745 310L1800 315L1850 290M1750 312L1755 400L1785 500L1815 505M1760 350H1790M1810 350H1855M1765 400H1785M1780 430L1810 400L1820 395M1810 445L1820 460M1820 405L1850 388H1858M1800 400L1830 420M1860 320L1895 315L1910 305M1910 305L1930 315V295M1895 340L1910 365M1900 455L1930 465M1880 462V545M1880 495H1920M1820 520H1840V545M1840 520V545M1700 535H1735" />
          <path d="M1380 535L1372 620L1360 670L1355 768M1395 535V590M1430 545V570L1455 605H1490V635H1455V605M1430 585L1410 615L1370 620L1215 610M1420 625L1425 635M1575 555V625L1555 660L1535 700V740L1545 768M1575 630L1590 640M1570 590H1520V640H1560M1400 670H1485Q1500 670 1502 690V735H1400V680ZM1355 730H1405M1502 693H1550M1400 705H1500M1625 768L1630 690L1650 660V610H1740V640L1770 680H1930M1580 695H1680M1600 768L1590 745M1625 765H1670V610M1710 610V768M1680 665H1710M1735 690V710H1745V680M1710 712H1860V690M1750 655L1740 660M1650 735H1680M1650 690V740M1815 560L1850 620M1870 600V620M1895 600V620M1930 600V620M1960 600V620M1985 600V620M2030 600V625M2045 565V575M2010 620V700L2000 730H2050M1950 667L2035 672M1965 700L1995 710L2010 725M1935 730L1960 745L1980 768M2080 675L2085 695L2110 720M2090 720V740L2110 750M1745 740V768M1780 745V768M1810 740V768M1840 745V768M1870 745V768M2065 610L2090 620M1250 765V745H1310V768M1210 735V768M1455 745V768M1170 660L1380 675" />
          <path d="M1080 550V640M1100 530V655M1115 530V650M1132 530V768M1150 530V600M1080 600H1210M1150 545H1210V630H1150M1150 565H1210M1150 585H1210M1150 605H1210M1080 683H1160M1080 710H1180M1080 740H1125V768M1080 660H1160M1145 530V630M1100 605L1140 625M1160 470H1225V530M1105 738V755" strokeWidth="3.500" />
        </g>
        <path d="M1248 75L1208 165L1130 325M1018 600V680M1380 535L1480 550L1900 573L2110 583M108 170L50 235M1975 75L1965 215L1940 570L1930 768" stroke="#2d8416" strokeWidth="3" />
        <path d="M1018 680L1038 768" stroke="#26641a" strokeWidth="5" />
        <path d="M360 357h13M262 485h8M450 470h9M1365 540h12M1555 695h25M178 530h8" stroke="#fff" strokeWidth="6" />

        {/* selected features */}
        <g stroke="#4cc4c0" strokeWidth="8">
          <path d="M797 470V550M890 422L925 405L1010 392L1080 405L1060 455M1038 398L1032 432L895 424M925 402H1005" />
          <path d="M1120 330L1090 400L1080 410M1120 335L1185 320L1180 355L1080 365M1140 335L1100 380H1170L1160 415L1080 400M1170 325V400L1195 415M1180 355L1190 390L1215 410M1220 325V385L1245 380L1255 330L1280 327M1220 325L1280 325L1245 375M1285 340H1335M1400 235L1375 315M1330 292H1385M1110 345L1170 350M1095 385L1170 390M1085 415H1180M1240 330V380" />
        </g>
        <path d={red} stroke="#22e9e4" strokeWidth="7.500" />
        <circle cx="493" cy="430" r="9.500" fill="#467d22" stroke="#34641c" strokeWidth="3" />
        <circle cx="631" cy="451" r="9.500" fill="#9b781e" stroke="#766021" strokeWidth="3" />
        <circle cx="1363" cy="193" r="9.500" fill="#9b4420" stroke="#6a3820" strokeWidth="3" />
        <circle cx="1927" cy="463" r="19" fill="#e60000" stroke="#111" strokeWidth="4" />
        <circle cx="1183" cy="676" r="19" fill="#e60000" stroke="#111" strokeWidth="4" />
      </g>
    </MapSvg>
  );
}

const Center = styled.div`display: flex; flex-direction: column; width: 702px; margin-left: 6px; flex: none;`;
const TabStrip = styled.div<{ $line: string; $b: number }>`
  display: flex;
  height: 23px;
  flex: none;
  align-items: flex-start;
  justify-content: space-between;
  border-bottom: ${(p) => p.$b}px solid ${(p) => p.$line};
`;
const DocTab = styled.div<{ $w: number; $bg: string; $c: string }>`display: flex; align-items: center; width: ${(p) => p.$w}px; height: 21px; padding: 2px 0 0 6px; background: ${(p) => p.$bg}; color: ${(p) => p.$c};`;
const StripCaret = styled.div`display: flex; padding: 10px 4px 0 0;`;
const MapFrame = styled.div`display: flex; flex-direction: column; flex: none; height: 256px; border: 1px solid #c8c8c8; border-top: 0; background: #f7f9f8;`;
const MapFooter = styled.div`display: flex; align-items: center; height: 24px; padding-left: 5px;`;
const ScaleBox = styled.div`display: flex; align-items: center; width: 100px; height: 21px; border: 1px solid #a4a4a4; background: #fff;`;
const SelectedCount = styled.div`display: flex; align-items: center; width: 135px; height: 20px; margin-left: 4px; background: #fff; padding-left: 3px;`;

function MapView() {
  return (
    <>
      <TabStrip $line="#c8c8c8" $b={3}>
        <DocTab $w={89} $bg="#c8c8c8" $c="#666">
          <Ico w={16} h={16}><path d="M.5 .5h15v15H.5z" fill="#fff" stroke="#555" /><path d="M2 2h12v12H2z" fill="#cfe8f6" /><path d="M2 2h10L8 7v4L2 14zM10 14l4-5v5z" fill="#90c497" /></Ico>
          <T w={39} ml={5}>Layers2</T><CloseX ml={8} />
        </DocTab>
        <StripCaret><CaretShape $s={4} $c="#888" /></StripCaret>
      </TabStrip>
      <MapFrame>
        <MapDrawing />
        <MapFooter>
          <ScaleBox><T w={42} ml={5}>1:31.478</T><CaretShape $ml={42} $mt={-2} /></ScaleBox>
          <Divider $h={15} $ml={4} />
          <Ico w={16} h={16} ml={7}><path d="M.5 .5h11v11H.5zM6 .5v11M.5 6h11" stroke="#777" /><path d="M8 8h8v8H8z" fill="#f7f9f8" /><path d="M12 8v8M8 12h8" stroke={B} strokeWidth="1.800" /></Ico>
          <Ico w={16} h={16} ml={6}><path d="M1 15L14 2l1 13z" fill="#cfe8f6" /><path d="M.5 2.500h4v3h-4zM12 10h3v4h-3z" fill="#fff" stroke="#666" /><path d="M5 4h6M3 11l6-6M2 14h9" stroke={B} strokeDasharray="2 1" /><path d="M13 0v5M10.500 2.500H16" stroke={G} /><path d="M0 13h3v3H0z" fill="#3c8648" /></Ico>
          <Ico w={14} h={14} ml={7}><path d="M.5 .5h12.500v12.500H.5zM3.600 .5V13M6.800 .5V13M9.900 .5V13M.5 3.600H13M.5 6.800H13M.5 9.900H13" stroke="#888" strokeWidth=".8" /></Ico>
          <Ico w={15} h={15} ml={7}><path d="M1 0h7v7H1z" fill="#dbeedb" /><path d="M7.500 9v6M0 7.500h6M9 7.500h6" stroke="#777" strokeDasharray="2 1" /><path d="M7.500 6v3M6 7.500h3" stroke="#333" /></Ico>
          <Ico w={16} h={16} ml={6}><path d="M1.500 12V5l4.500 7V5" stroke="#2b8cd0" strokeWidth="1.900" /><path d="M8.500 0v16M9 15 15.500 8" stroke="#555" /><path d="M10 1q4-1 4 4M12 4l2 2.500L16 4" stroke={B} strokeWidth="1.300" /></Ico>
          <Divider $h={15} $ml={8} />
          <T w={147} ml={52}>82,9442252°W 40,1272124°N</T>
          <Ico w={9} h={6} ml={11}><path d="M.7 .8 4.500 4.500 8.300 .8" stroke="#666" strokeWidth="1.900" /></Ico>
          <Divider $h={15} $ml={51} />
          <SelectedCount>
            <Ico w={16} h={16}><path d="M6.500 4V.5h9v10h-3M9 1l2 3 4-1M11 4v5" stroke="#777" /><circle cx="5.500" cy="8.500" r="4.500" fill="#def0fa" stroke={B} /><path d="M3 8.500h5M5.500 6v5" stroke="#1d75b8" strokeWidth="1.300" /><path d="M9 12l3 3.500" stroke="#b98443" strokeWidth="2" /></Ico>
            <T w={110} ml={4}>Selected Features: 47</T>
          </SelectedCount>
          <Divider $h={15} $ml={4} />
          <Ico w={11} h={14} ml={8}><path d="M0 0h4v14H0zM7 0h4v14H7z" fill="#6e6e6e" /></Ico>
          <Divider $h={15} $ml={9} />
          <Refresh ml={6} />
        </MapFooter>
      </MapFrame>
    </>
  );
}

/* ---------- attribute table ---------- */

const TableFrame = styled.div`display: flex; flex-direction: column; flex: none; height: 255px; border: 1px solid #c8c8c8; border-top: 0; padding: 1px 1px 0; background: #f7f9f8;`;
const Toolbar = styled.div`display: flex; align-items: center; height: 31px; flex: none; border: 1px solid #a2a2a2; background: #f1f1f1; padding-left: 5px;`;
const GridArea = styled.div`height: 195px; flex: none; background: #fff; border: 1px solid #c8c8c8;`;
const GridRow = styled.div<{ $h: number }>`display: flex; height: ${(p) => p.$h}px;`;
const RowHead = styled.div<{ $on?: boolean }>`
  display: flex;
  align-items: center;
  justify-content: center;
  flex: none;
  width: 24px;
  border-right: 1px solid #c8c8c8;
  border-bottom: 1px solid #c8c8c8;
  background: ${(p) => (p.$on ? "#cbe3f5" : "#ebebeb")};
  ${(p) => p.$on && css`border-right: 2px solid #0a7bc7;`}
`;
const CornerHead = styled(RowHead)`justify-content: flex-end; align-items: flex-end; padding: 0 2px 3px 0; background: #fff;`;
const Cell = styled.div<{ $w: number; $ml?: number; $bg?: string; $mark?: boolean }>`
  display: flex;
  flex: none;
  align-items: center;
  width: ${(p) => p.$w}px;
  margin-left: ${(p) => p.$ml ?? 0}px;
  background: ${(p) => p.$bg ?? "#fff"};
  border-right: 1px solid #c8c8c8;
  border-bottom: 1px solid #c8c8c8;
  ${(p) => p.$mark && css`border-bottom: 2px solid #0a7bc7;`}
`;
const AddRow = styled.div`display: flex; align-items: center; width: 287px; background: #ebebeb; border-bottom: 1px solid #d0d0d0;`;
const StatusRow = styled.div`display: flex; align-items: center; height: 27px; margin-top: 1px;`;
const ViewButton = styled.div`display: flex; align-items: center; justify-content: center; width: 22px; height: 22px; border: 1px solid #0a7bc7; background: #a9cbe8;`;
const Slider = styled.div`display: flex; align-items: center; width: 100px; height: 13px; margin-left: 8px;`;
const SliderPart = styled.i<{ $w: number; $h: number; $c: string }>`width: ${(p) => p.$w}px; height: ${(p) => p.$h}px; background: ${(p) => p.$c};`;
const PercentBox = styled.div`display: flex; align-items: center; width: 60px; height: 22px; margin-left: 7px; padding-left: 6px; background: #fff;`;

const RowsIcon = ({ ml, c = G, f = "#fff" }: { ml: number; c?: string; f?: string }) => (
  <Ico w={16} h={14} ml={ml}><path d="M.5 .5h14v12h-14z" fill={f} stroke={c} /><path d="M.5 3.500h14M.5 6.500h14M.5 9.500h14" stroke={c} /></Ico>
);

function AttributeTable() {
  return (
    <>
      <TabStrip $line="#0078d0" $b={2}>
        <DocTab $w={181} $bg="#0078d0" $c="#fff"><TableIcon bg="#eee" /><T w={131} ml={6}>Streets_Identity_Statistics</T><CloseX ml={8} c="#dcebf8" /></DocTab>
        <StripCaret><CaretShape $s={4} $c="#888" /></StripCaret>
      </TabStrip>
      <TableFrame>
        <Toolbar>
          <T w={29} weight={600}>Field:</T>
          <Ico w={15} h={15} ml={9}><path d="M.5 .5h14v10H.5z" fill="#fff" stroke={G} /><path d="M1 1h13v2.500H1z" fill="#64abdf" /><path d="M.5 6.500h14M5.500 3.500v7M10.500 3.500v7" stroke={G} strokeWidth=".8" /><path d="M2.500 11.500h6M5.500 8.500v6" stroke="#444" strokeWidth="2" /></Ico>
          <Ico w={15} h={15} ml={11}><path d="M.5 .5h14v10H.5z" fill="#fff" stroke={G} /><path d="M1 1h13v2.500H1z" fill="#64abdf" /><path d="M5.500 4h5v7h-5z" fill="#cfc9e2" /><path d="M.5 6.500h14M5.500 3.500v7M10.500 3.500v7" stroke={G} strokeWidth=".8" /><path d="M5 10h7v4H5z" fill="#f1f1f1" /><path d="M6 11h5M6 13.500h5" stroke={G} strokeWidth="1.300" /></Ico>
          <Divider $h={21} $ml={9} />
          <T w={55} ml={8} weight={600}>Selection:</T>
          <Ico w={16} h={16} ml={9}><path d="M5 9.500H.5v-9h9V5M1 1l4 4 4-4" stroke={G} fill="#d2e9f8" /><path d="M6.500 5.500h9v10h-9z" fill="#fff" stroke={G} /><path d="M7 6h8v2.500H7z" fill="#64abdf" /><path d="M6.500 11h9M6.500 13h9M9.500 8.500v7M12.500 8.500v7" stroke={G} strokeWidth=".8" /></Ico>
          <Ico w={16} h={16} ml={10}><path d="M6.500 .5h9v7h-9zM6.500 3h9M6.500 5h9" stroke="#bbb" /><circle cx="5" cy="8" r="4.300" fill="#eef6fb" stroke="#a9cde3" /><path d="M2.500 8h5M5 5.500v5" stroke="#8fbfdd" /><path d="M8.500 11l3.500 4" stroke="#dcc3a2" strokeWidth="2" /></Ico>
          <Ico w={16} h={16} ml={10}><path d="M.5 .5h9v6h-9zM6.500 9.500h9v6h-9z" fill="#fff" stroke={G} /><path d="M.5 2.500h9M.5 4.500h9M6.500 11.500h9M6.500 13.500h9" stroke={G} /><path d="M11 1.500q3 0 3 4M12 4l2 2.500L16 4M5 14.500q-3 0-3-4M0 12l2-2.500L4 12" stroke={G} /></Ico>
          <RowsIcon ml={10} c="#c0c0c0" f="#f4f4f4" />
          <Ico w={15} h={15} ml={10}><path d="M.5 .5h14v12h-14zM.5 3.500h14M.5 6.500h14M.5 9.500h14" stroke="#c0c0c0" /><path d="M3 9l5 5M8 9l-5 5" stroke="#e6b1a4" strokeWidth="2" /></Ico>
          <Ico w={16} h={16} ml={11}><path d="M4.500 .5h11v8h-11z" stroke="#c0c0c0" /><path d="M.5 6.500h11v9H.5z" fill="#e3eff6" stroke="#c0c0c0" /><path d="M4.500 3h11M.5 9.500h11M.5 12.500h11" stroke="#c0c0c0" /></Ico>
          <Divider $h={21} $ml={8} />
          <T w={33} ml={8} weight={600}>Rows:</T>
          <Ico w={16} h={15} ml={7}><path d="M.5 .5h14v8H.5zM.5 3h14M.5 6h14" stroke={G} fill="#fff" /><path d="M5 10h10v4H5z" fill="#f1f1f1" /><path d="M7 11h7M10.500 8v6" stroke={G} strokeWidth="1.200" /></Ico>
          <CaretShape $ml={3} />
          <Ico w={14} h={11} ml={281}><path d="M0 1h14M0 5.500h14M0 10h14" stroke="#555" strokeWidth="2" /></Ico>
        </Toolbar>
        <GridArea>
          <GridRow $h={24}>
            <CornerHead><svg width="10" height="10" viewBox="0 0 10 10"><path d="M10 0v10H0z" fill="#c4c4c4" /></svg></CornerHead>
            <Cell $w={89} $ml={4} $bg="#cbe3f5" $mark><T w={76} ml={7}>OBJECTID_12 *</T></Cell>
            <Cell $w={78} $bg="#ebebeb"><T w={66} ml={6}>FREQUENCY</T></Cell>
            <Cell $w={116} $bg="#ebebeb"><T w={104} ml={6}>SUM_Shape_Length</T></Cell>
          </GridRow>
          <GridRow $h={25}>
            <RowHead $on><T w={6} color="#666">1</T></RowHead>
            <Cell $w={89} $ml={4} $bg="#cbe3f5"><T w={6} ml={6}>1</T></Cell>
            <Cell $w={78}><T w={13} ml={59}>43</T></Cell>
            <Cell $w={116}><T w={69} ml={41}>14086,810651</T></Cell>
          </GridRow>
          <GridRow $h={25}>
            <RowHead /><AddRow><T w={113} ml={4}>Click to add new row.</T></AddRow>
          </GridRow>
        </GridArea>
        <StatusRow>
          <ViewButton><svg width="16" height="14" viewBox="0 0 16 14"><path d="M.5 .5h15v13H.5z" fill="#fff" stroke={G} /><path d="M.5 3.500h15M.5 7h15M.5 10.500h15" stroke={G} /></svg></ViewButton>
          <Ico w={15} h={10} ml={6} mt={-5}><path d="M.5 .5h14v9H.5z" fill="#a9cbe8" stroke={G} /><path d="M.5 3.500h14M.5 6.500h14" stroke={G} /></Ico>
          <Ico w={10} h={10} ml={11}><path d="M1 0v10" stroke="#aaa" strokeWidth="1.500" /><path d="M9 0v10L3 5z" fill="#b9b9b9" /></Ico>
          <Ico w={10} h={10} ml={13}><path d="M9 0v10" stroke="#aaa" strokeWidth="1.500" /><path d="M1 0v10l6-5z" fill="#b9b9b9" /></Ico>
          <T w={75} ml={13}>0 of 1 selected</T>
          <T w={34} ml={152}>Filters:</T>
          <Ico w={15} h={15} ml={10}><circle cx="7.500" cy="7.500" r="6.800" fill="#f2f2f2" stroke="#cfcfcf" /><path d="M7.500 3v5h4" stroke="#c2d8c2" strokeWidth="1.500" /></Ico>
          <Ico w={15} h={15} ml={8}><circle cx="7.500" cy="7.500" r="6.800" fill="#f2f2f2" stroke="#cfcfcf" /><path d="M3 0v6M6.500 0v7M10 2v6M8 8v4h4" stroke="#c9d6c9" strokeWidth="1.300" /></Ico>
          <Ico w={16} h={16} ml={9}><path d="M.5 .5h13v2L9 7v7.500L5.500 12V7L.5 2.500z" fill="#aaa" stroke="#555" /><path d="M8 7h8v9H8z" fill="#f7f9f8" /><path d="M8.500 8h8M8.500 11h8M8.500 14h8" stroke={B} strokeWidth="1.800" strokeDasharray="2 1" /></Ico>
          <Divider $h={15} $ml={5} />
          <Ico w={8} h={15} ml={5}><path d="M4 0l4 4.500H5.500V8h-3V4.500H0z" fill="#bfe0bf" /><path d="M4 15l4-4.500H5.500V8h-3v2.500H0z" fill="#f3cda3" /></Ico>
          <Ico w={7} h={2} ml={14}><path d="M0 1h7" stroke="#555" strokeWidth="2" /></Ico>
          <Slider><SliderPart $w={48} $h={3} $c="#a2a2a2" /><SliderPart $w={3} $h={11} $c="#707070" /><SliderPart $w={49} $h={3} $c="#dcdcdc" /></Slider>
          <Ico w={8} h={8} ml={7}><path d="M0 4h8M4 0v8" stroke="#555" strokeWidth="1.800" /></Ico>
          <PercentBox><T w={29}>100%</T><CaretShape $ml={14} $mt={-2} /></PercentBox>
          <Divider $h={15} $ml={6} />
          <Refresh ml={6} />
        </StatusRow>
      </TableFrame>
    </>
  );
}

/* ---------- geoprocessing pane ---------- */

const RightColumn = styled.div`display: flex; flex-direction: column; width: 320px; margin-left: 6px; flex: none;`;
const Field = styled.div<{ $w: number; $ml?: number }>`
  display: flex;
  align-items: center;
  justify-content: space-between;
  flex: none;
  width: ${(p) => p.$w}px;
  height: 22px;
  margin-left: ${(p) => p.$ml ?? 0}px;
  padding: 0 3px 0 4px;
  border: 1px solid #a3a3a3;
  background: #fff;
`;
const ParamTabs = styled.div`display: flex; align-items: flex-start; height: 22px; margin: 13px 0 0 9px;`;
const ParamActive = styled.div`padding-top: 2px; height: 22px; border-bottom: 2px solid #0a7bc7;`;
const Grip = styled.i`width: 6px; height: 22px; background: #dedede; flex: none;`;
const RunButton = styled.div`display: flex; align-items: center; width: 82px; height: 24px; margin: 154px 0 0 230px; border: 1px solid #505050; background: #fff;`;
const Notice = styled.div`display: flex; align-items: center; width: 311px; height: 44px; margin: 6px 0 0 4px; background: #e3efe3;`;
const NoticeText = styled.div`display: flex; flex-direction: column; gap: 3px; margin-left: 17px; width: 248px;`;
const BottomTabs = styled.div`display: flex; height: 20px; padding-left: 6px; margin-top: -1px;`;
const ActiveTab = styled.div`display: flex; width: 89px; height: 20px; margin-left: 6px; padding: 2px 0 0 5px; border: 1px solid #c9cbca; border-top: 0; background: #f7f9f8; position: relative;`;

const Drop = () => <CaretShape $c="#222" $s={3} $mt={-2} />;
const Folder = () => <Ico w={16} h={12} ml={7}><path d="M0 12V1h5l1.500 1.500H14V5" fill="#d2bd3c" /><path d="M0 12 3 5h13l-2 7z" fill="#e0cb52" stroke="#f7f9f8" strokeWidth=".6" /></Ico>;
const ChevronCircle = ({ ml }: { ml: number }) => <Ico w={18} ml={ml}><circle cx="9" cy="9" r="8.300" stroke="#666" fill="#fff" /><path d="M5.500 7.500 9 11l3.500-3.500" stroke="#555" strokeWidth="1.600" /></Ico>;

function Geoprocessing() {
  return (
    <RightColumn>
      <Pane $w={320} $h={546}>
        <Line $h={21} $ml={5} $mt={-1}><T w={103} size={15} lh={20} color="#666">Geoprocessing</T><CaretShape $ml={164} $s={4} $mt={-1} /><PaneTools /></Line>
        <Line $h={20} $mt={15} $ml={7}>
          <Ico w={18}><circle cx="9" cy="9" r="8.300" stroke="#666" /><path d="M4.500 9h10M8.500 5l-4 4 4 4" stroke="#555" strokeWidth="1.700" /></Ico>
          <T w={124} ml={73} size={14} lh={20} color="#505050">Summary Statistics</T>
          <Ico w={18} ml={72}><circle cx="9" cy="9" r="8.300" stroke="#666" /><path d="M4 9h10M9 4v10" stroke="#555" strokeWidth="1.700" /></Ico>
        </Line>
        <ParamTabs>
          <ParamActive><T w={69} size={12.5} weight={600} lh={16}>Parameters</T></ParamActive>
          <Line $mt={2}><T w={78} ml={10} size={12.5}>Environments</T></Line>
          <Ico w={16} ml={130} mt={2}><circle cx="8" cy="8" r="7.400" fill="#ddeffa" stroke={B} /><path d="M5.500 6q.2-2.500 2.500-2.500T10.500 6Q10.500 7.500 8 8.500V10M8 11.500V13" stroke="#3b94d1" strokeWidth="1.600" /></Ico>
        </ParamTabs>
        <Line $h={15} $ml={18} $mt={11}><T w={58}>Input Table</T></Line>
        <Line $ml={18}><Field $w={266}><T w={80}>Streets_Identity</T><Drop /></Field><Folder /></Line>
        <Line $h={15} $ml={3} $mt={4}>
          <Ico w={12} h={12}><path d="M6 .5 11.700 11.500H.3z" fill="#f5c995" stroke="#eab071" /><path d="M6 4v4M6 9.200v1.500" stroke="#444" strokeWidth="1.500" /></Ico>
          <T w={68} ml={3}>Output Table</T>
        </Line>
        <Line $ml={18}><Field $w={266}><T w={131}>Streets_Identity_Statistics</T></Field><Folder /></Line>
        <Line $h={16} $ml={18} $mt={4}><T w={87}>Statistics Field(s)</T></Line>
        <Line $h={18} $ml={18}><T w={25}>Field</T><ChevronCircle ml={3} /><Line $mt={-3}><T w={68} ml={100}>Statistic Type</T></Line></Line>
        <Line $ml={18}><Grip /><Field $w={122} $ml={14}><T w={74}>Shape_Length</T><Drop /></Field><Field $w={146} $ml={4}><T w={24}>Sum</T><Drop /></Field></Line>
        <Line $ml={38} $mt={2}><Field $w={122}><i /><Drop /></Field><Field $w={146} $ml={4}><i /><Drop /></Field></Line>
        <Line $h={18} $ml={18} $mt={6}><T w={51}>Case field</T><ChevronCircle ml={3} /></Line>
        <Line $ml={38}><Field $w={272}><i /><Drop /></Field></Line>
        <RunButton>
          <Ico w={16} ml={11}><circle cx="8" cy="8" r="7.400" fill="#d5ebfa" stroke={B} /><path d="M5.500 3.500v9L12 8z" fill="#2f8ccc" /></Ico>
          <T w={20} ml={7} size={12.5}>Run</T><CaretShape $ml={17} $s={3} />
        </RunButton>
        <Notice>
          <Ico w={12} ml={13}><circle cx="6" cy="6" r="6" fill="#5ba565" /><path d="M3 6l2.300 2.500L9 4" stroke="#fff" strokeWidth="1.700" /></Ico>
          <NoticeText>
            <T w={163}>Summary Statistics completed.</T>
            <Line><T w={63} color="#468a50">View Details</T><T w={70} ml={7} color="#468a50">Open History</T></Line>
          </NoticeText>
          <CloseX ml={4} c="#888" />
        </Notice>
      </Pane>
      <BottomTabs>
        <Line $h={20}><T w={41}>Catalog</T></Line>
        <ActiveTab><T w={78} color="#1472c4">Geoprocessing</T></ActiveTab>
        <Line $h={20}><T w={60} ml={7}>Symbology</T></Line>
      </BottomTabs>
    </RightColumn>
  );
}

/* ---------- taskbar ---------- */

const Bar = styled.footer`display: flex; align-items: center; flex: none; height: 40px; background: #ededed; color: #222;`;
const SearchField = styled.div`display: flex; align-items: center; width: 344px; height: 40px; margin-left: 16px; border: 1px solid #c6c6c6; background: #fff;`;
const AppButton = styled.div<{ $w: number; $ml: number; $on?: boolean }>`
  display: flex;
  align-items: center;
  justify-content: center;
  width: ${(p) => p.$w}px;
  height: 40px;
  margin-left: ${(p) => p.$ml}px;
  padding-top: 2px;
  border-bottom: 2px solid #4c4c4c;
  background: ${(p) => (p.$on ? "#fafafa" : "transparent")};
`;
const Clock = styled.div`display: flex; flex-direction: column; align-items: center; width: 58px; margin-left: 9px; gap: 2px;`;

function TaskBar() {
  return (
    <Bar>
      <Ico w={16} h={16} ml={16}><path d="M0 2.200 7 1.200v6.300H0zM8 1l8-1v7.500H8zM0 8.500h7v6.300l-7-1zM8 8.500h8V16l-8-1z" fill="#000" /></Ico>
      <SearchField>
        <Ico w={17} h={17} ml={11}><circle cx="10.500" cy="6" r="5.200" stroke="#222" strokeWidth="1.300" /><path d="M7 9.500.8 16" stroke="#222" strokeWidth="1.400" /></Ico>
        <T w={128} ml={11} size={14} lh={20}>Type here to search</T>
      </SearchField>
      <Ico w={17} h={15} ml={16}><path d="M2 4.500h9v6H2zM0 1.500h13M1 0v2M12 0v2M0 13.500h13M1 13v2M12 13v2" stroke="#000" strokeWidth="1.100" /><path d="M15.500 0v15" stroke="#000" /><path d="M14 4h3v3h-3z" fill="#000" /></Ico>
      <AppButton $w={40} $ml={22}><Ico w={22} h={20}><path d="M0 0h8l2 2v3H0z" fill="#dc9a22" /><path d="M0 3h22v15H0z" fill="#fbd55d" /><path d="M4 10h14v9h-4v-4H8v4H4z" fill="#3e92d0" /></Ico></AppButton>
      <Ico w={24} h={22} ml={17}><path d="M6 0h18v22H6z" fill="#2b7cd3" /><path d="M6 0h18v6H6z" fill="#41a5ee" /><path d="M6 11h18v6H6z" fill="#185abd" /><path d="M6 17h18v5H6z" fill="#103f91" /><path d="M0 5h12v12H0z" fill="#185abd" /><path d="M2.500 8l1.500 6L6 8.500 8 14l1.500-6" stroke="#fff" strokeWidth="1.400" /></Ico>
      <AppButton $w={40} $ml={17}>
        <Ico w={25} h={24}>
          <circle cx="11" cy="11" r="11" fill="#fbc116" /><path d="M11 11 1.500 5.500A11 11 0 0 1 21 6z" fill="#e33b2e" /><path d="M11 11 1.500 5.500A11 11 0 0 0 10 22l4-7z" fill="#2da94f" />
          <circle cx="11" cy="11" r="5" fill="#fff" /><circle cx="11" cy="11" r="4" fill="#3b7de9" /><circle cx="17.500" cy="17" r="7" fill="#5d4037" /><text x="14.500" y="20" fontSize="10" fill="#fff" fontFamily="Open Sans, sans-serif">g</text>
        </Ico>
      </AppButton>
      <AppButton $w={48} $ml={5} $on><Ico w={22} h={24}><path d="M11 0 22 6v12l-11 6L0 18V6z" fill="#1678d4" /><path d="M11 0 22 6v12l-11 6z" fill="#0b63bd" /><circle cx="11" cy="12" r="6.800" stroke="#fff" strokeWidth="1.600" fill="#1678d4" /><path d="M7 7.500l4-1.500.5 3-2.500 2v3l-2-2zM12.500 9l3 .5-.5 4-2.500 3z" fill="#fff" /></Ico></AppButton>
      <Ico w={20} h={16} ml={379}><path d="M4 15h13q4-4 0-8Q15-1 8 2 5 4 4.500 7-1 9 1 13z" fill="#8ac6ef" /><path d="M4 15h8q5-4 1-8-4-3-8 1-5 1-4 5z" fill="#c7e7fb" /></Ico>
      <T w={29} ml={9} size={13}>24°C</T><T w={52} ml={10} size={13}>Berawan</T>
      <Ico w={12} h={7} ml={17}><path d="M.5 6.500 6 1l5.500 5.500" stroke="#111" strokeWidth="1.300" /></Ico>
      <Ico w={16} h={12} ml={9} mt={-1}><path d="M4.500 3.500h9.500v7H4.500z" stroke="#111" /><path d="M6 5h6.500v4H6z" fill="#111" /><path d="M15.500 5v4M1 0v3M4 0v3M0 3h5l-1 3H1zM2.500 6v3H5" stroke="#111" /></Ico>
      <Ico w={16} h={13} ml={8}><path d="M.5 4.500h2.500L6.500 1v11L3 8.500H.5zM8.500 4.500q1.500 2 0 4" stroke="#111" /><path d="M11 3q2.500 3.500 0 7M13.500 1.500q4 5 0 10" stroke="#999" /></Ico>
      <Ico w={13} h={13} ml={11}><path d="M1 12Q1 2 12 1M4 12q0-7 8-8M7 12q0-4 5-5M10 12l2-2v2z" stroke="#222" strokeWidth="1.100" /></Ico>
      <Clock><T w={21}>2:10</T><T w={58}>01/12/2021</T></Clock>
      <Ico w={24} h={24} ml={18} mt={2}><path d="M0 0h17v13H5l-3 3v-3H0z" fill="#000" /><path d="M3 3.500h11M3 6.500h11M3 9.500h8" stroke="#fff" /><circle cx="15.500" cy="15.500" r="8" fill="#dedede" stroke="#888" /><text x="12.600" y="19.500" fontSize="11" fill="#111" fontFamily="Open Sans, sans-serif">3</text></Ico>
      <Divider $h={40} $ml={12} />
    </Bar>
  );
}

export default function App() {
  return (
    <Screen>
      <Global />
      <TopBar />
      <RibbonBar />
      <Workspace>
        <Contents />
        <Center>
          <MapView />
          <Line $h={6} />
          <AttributeTable />
        </Center>
        <Geoprocessing />
      </Workspace>
      <TaskBar />
    </Screen>
  );
}
